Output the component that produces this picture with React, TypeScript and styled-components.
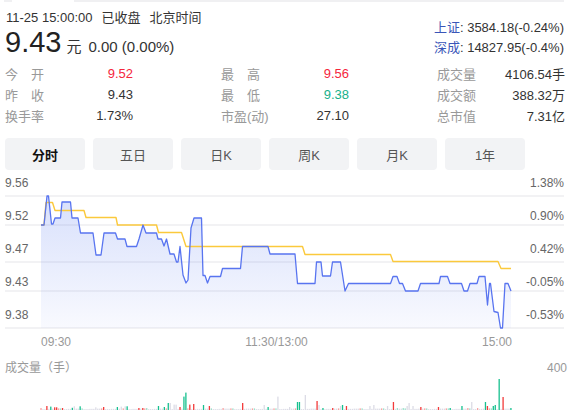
import React from 'react';
import styled, { createGlobalStyle } from 'styled-components';

const Global = createGlobalStyle`
  html, body { margin: 0; padding: 0; background: #fff; overflow: hidden; }
  body { font-family: "Liberation Sans", "Noto Sans CJK SC", sans-serif; color: #333; }
`;

const Page = styled.div`
  width: 569px;
  height: 410px;
  overflow: hidden;
  padding: 0 5px;
  box-sizing: border-box;
`;

const TopEdge = styled.div`
  display: flex;
  gap: 62px;
  height: 2px;
  margin-left: -1px;
`;

const EdgeSeg = styled.div<{ $grow?: boolean }>`
  background: #f0f0f2;
  width: ${(p) => (p.$grow ? 'auto' : '8px')};
  flex: ${(p) => (p.$grow ? '1' : 'none')};
`;

const Header = styled.div`
  display: flex;
  justify-content: space-between;
  padding-top: 6px;
`;

const HeaderLeft = styled.div`
  display: flex;
  flex-direction: column;
`;

const TimeLine = styled.div`
  font-size: 13px;
  line-height: 20px;
  padding-left: 1px;
  display: flex;
  gap: 9px;
  color: #333;
`;

const PriceRow = styled.div`
  display: flex;
  align-items: baseline;
  height: 29px;
`;

const Price = styled.span`
  font-size: 29px;
  line-height: 29px;
  color: #222;
`;

const Unit = styled.span`
  font-size: 15px;
  line-height: 1;
  margin-left: 5px;
  color: #333;
`;

const Change = styled.span`
  font-size: 15px;
  line-height: 1;
  margin-left: 7px;
  color: #333;
`;

const IndexBox = styled.div`
  margin-top: 10px;
  font-size: 13px;
  line-height: 20px;
  text-align: right;
  color: #333;
`;

const IndexName = styled.span`
  color: #3a56b8;
`;

const StatsGrid = styled.div`
  display: grid;
  grid-template-columns: repeat(3, 128px);
  column-gap: 88px;
  margin-top: 5px;
`;

const StatItem = styled.div`
  display: flex;
  justify-content: space-between;
  align-items: center;
  height: 21px;
  font-size: 13px;
`;

const StatLabel = styled.span`
  color: #999;
  min-width: 39px;
  text-align: justify;
  text-align-last: justify;
  white-space: nowrap;
`;

const StatValue = styled.span<{ $tone?: 'up' | 'down' }>`
  color: ${(p) => (p.$tone === 'up' ? '#f5263c' : p.$tone === 'down' ? '#18b08a' : '#333')};
`;

const TabBar = styled.div`
  display: flex;
  gap: 8px;
  margin-top: 12px;
`;

const Tab = styled.div<{ $active?: boolean }>`
  width: 80px;
  height: 32px;
  display: flex;
  align-items: center;
  justify-content: center;
  background: #f2f3f5;
  border-radius: 4px;
  font-size: 13px;
  color: ${(p) => (p.$active ? '#111' : '#555')};
  font-weight: ${(p) => (p.$active ? 700 : 400)};
`;

const ChartStack = styled.div`
  display: grid;
  height: 162px;
  margin-top: 2px;
`;

const ChartSvg = styled.svg`
  grid-area: 1 / 1;
  display: block;
`;

const Axis = styled.div<{ $side: 'left' | 'right' }>`
  grid-area: 1 / 1;
  justify-self: ${(p) => (p.$side === 'left' ? 'start' : 'end')};
  align-self: start;
  display: flex;
  flex-direction: column;
  align-items: ${(p) => (p.$side === 'left' ? 'flex-start' : 'flex-end')};
  gap: 19px;
  padding-top: 4px;
  font-size: 12px;
  line-height: 14px;
  color: #666;
`;

const TimeRow = styled.div`
  display: flex;
  justify-content: space-between;
  margin-top: 1px;
  padding: 0 52px 0 36px;
  font-size: 12px;
  line-height: 14px;
  color: #999;
`;

const VolumeHeader = styled.div`
  display: flex;
  justify-content: space-between;
  margin-top: 11px;
  margin-right: -3px;
  font-size: 12px;
  line-height: 16px;
  color: #999;
`;

const VolumeSvg = styled.svg`
  display: block;
`;

const stats: { label: string; value: string; tone?: 'up' | 'down' }[] = [
  { label: '今 开', value: '9.52', tone: 'up' },
  { label: '最 高', value: '9.56', tone: 'up' },
  { label: '成交量', value: '4106.54手' },
  { label: '昨 收', value: '9.43' },
  { label: '最 低', value: '9.38', tone: 'down' },
  { label: '成交额', value: '388.32万' },
  { label: '换手率', value: '1.73%' },
  { label: '市盈(动)', value: '27.10' },
  { label: '总市值', value: '7.31亿' },
];

const tabs = ['分时', '五日', '日K', '周K', '月K', '1年'];

const priceLine: [number, number][] = [
  [41, 225], [44, 225], [47, 196], [48.5, 196], [51.5, 224], [53, 224], [55, 218], [60.5, 218],
  [62, 202], [70.5, 202], [72, 218], [78, 218], [80.5, 233], [93, 233], [96, 255], [101, 255],
  [104, 233], [115.5, 233], [117.5, 239], [125, 239], [127, 246.5], [136.5, 246.5], [139, 239],
  [143, 225], [146, 233], [156.5, 233], [158, 239], [161.5, 239], [164, 246], [166.5, 239],
  [170, 254], [174, 254], [176.5, 262], [178, 262], [180, 246.5], [183, 275], [186, 283], [188, 280],
  [191, 228], [194, 218], [201.5, 218], [203, 275.5], [205, 275.5], [207.5, 283], [210, 276.5],
  [220.5, 276.5], [222.5, 268.5], [240.5, 268.5], [242.5, 246.5], [268, 246.5], [270, 254],
  [295, 254], [297.5, 283.5], [315, 283.5], [316.5, 262], [321, 262], [322.5, 276], [330.5, 276],
  [332.5, 262], [340.5, 262], [345, 291], [348.5, 283.5], [390.5, 283.5], [393, 276.5],
  [397, 276.5], [399.5, 283.5], [402.5, 283.5], [405.5, 291], [418, 291], [420.5, 283.5],
  [439, 283.5], [440.5, 276.5], [447.5, 276.5], [450, 283.5], [461.5, 283.5], [464, 291],
  [467.5, 291], [470, 283.5], [477, 283.5], [479, 276.5], [485, 276.5], [487.5, 305],
  [489.5, 283.5], [490.5, 283.5], [494, 311.5], [498, 312.5], [500.5, 328], [502.5, 328],
  [505, 283.5], [508, 283.5], [511, 291],
];

const avgLine: [number, number][] = [
  [41, 225], [44, 225], [46, 202.5], [52.5, 202.5], [55, 210.5], [84, 210.5], [86, 217.5],
  [116, 217.5], [117.5, 225], [156.5, 225], [158.5, 232.5], [181.5, 232.5], [186, 246.5],
  [302.5, 246.5], [305, 254.5], [390.5, 254.5], [393, 261.5], [498, 261.5], [501, 268.5],
  [511, 268.5],
];

const gridYs = [196, 225, 262, 291, 328];

const toPath = (pts: [number, number][]) =>
  pts.map(([x, y], i) => `${i === 0 ? 'M' : 'L'}${x} ${y}`).join(' ');

const linePath = toPath(priceLine);
const areaPath = `${linePath} L511 328 L41 328 Z`;
const avgPath = toPath(avgLine);

type Tone = 'r' | 'g' | 'k' | 'lr' | 'lg';
const volOverrides: [number, number, Tone][] = [
  [41, 1.3, 'lr'], [47, 3.3, 'r'], [51, 2.7, 'g'], [55, 2, 'r'], [57, 2, 'r'], [62, 1.3, 'r'],
  [73, 1.5, 'g'], [75, 3, 'k'], [80, 3, 'g'], [95, 2, 'k'], [103, 2.3, 'r'], [117, 2.3, 'g'],
  [122, 2.7, 'k'], [126, 3, 'k'], [128, 3, 'g'], [138, 1.3, 'r'], [143, 1.3, 'r'],
  [147, 1.3, 'lg'], [158, 3.3, 'g'], [164, 2.3, 'g'], [169, 6.3, 'g'], [171, 6.3, 'k'],
  [175, 4.7, 'k'], [177, 4.7, 'k'], [180, 2.3, 'r'], [183.3, 12.7, 'g'], [185.7, 16.7, 'g'],
  [189.3, 4.7, 'r'], [193.3, 5.3, 'r'], [203, 4.3, 'g'], [209, 3.3, 'r'], [223, 1.3, 'lr'],
  [242, 6.3, 'r'], [265, 4.3, 'k'], [269, 2.3, 'g'], [277.3, 12.7, 'k'], [289, 2.3, 'k'],
  [296.7, 7.3, 'g'], [298.6, 7.3, 'g'], [305, 14.3, 'k'], [316.7, 8.3, 'r'], [319, 4.3, 'k'],
  [322.7, 1.3, 'g'], [332, 1.3, 'r'], [340, 3.3, 'k'], [343.3, 4.3, 'g'], [347.3, 3.3, 'r'],
  [369, 3.3, 'k'], [373.3, 4.3, 'k'], [386.7, 3.3, 'k'], [392.7, 7.3, 'r'], [398.3, 1.3, 'lg'],
  [404, 1.3, 'lg'], [406.7, 3.3, 'k'], [410, 6.3, 'k'], [412.7, 3.3, 'k'], [420, 2.3, 'r'],
  [439.3, 2.3, 'r'], [449.3, 1.3, 'g'], [462.7, 3.3, 'g'], [468.3, 1.3, 'lr'],
  [472.7, 7.3, 'k'], [478.3, 1.3, 'lr'], [486, 7.3, 'g'], [488.3, 3.3, 'r'], [492.7, 3.3, 'g'],
  [494.3, 4.3, 'g'], [500, 30.3, 'g'], [504, 12.3, 'r'], [510, 1.3, 'g'],
];

const toneColor: Record<Tone, string> = {
  r: '#f23b3b',
  g: '#17c08f',
  k: '#dcdce6',
  lr: '#f7a3a3',
  lg: '#9fe0cc',
};

const STEP = 1.958;
const volumeBars = (() => {
  const bars = Array.from({ length: 241 }, (_, i) => {
    const seed = (i * 37) % 11;
    const tone: Tone = seed === 3 ? 'lr' : seed === 7 ? 'lg' : 'k';
    return { x: 41 + i * STEP, h: 0.9 + (seed % 4) * 0.25, tone };
  });
  volOverrides.forEach(([x, h, tone]) => {
    const i = Math.round((x - 41) / STEP);
    if (bars[i]) bars[i] = { x: bars[i].x, h: h + 0.7, tone };
  });
  return bars;
})();

export default function App() {
  return (
    <Page>
      <Global />
      <TopEdge>
        <EdgeSeg />
        <EdgeSeg $grow />
      </TopEdge>
      <Header>
        <HeaderLeft>
          <TimeLine>
            <span>11-25 15:00:00</span>
            <span>已收盘</span>
            <span>北京时间</span>
          </TimeLine>
          <PriceRow>
            <Price>9.43</Price>
            <Unit>元</Unit>
            <Change>0.00 (0.00%)</Change>
          </PriceRow>
        </HeaderLeft>
        <IndexBox>
          <div>
            <IndexName>上证</IndexName>: 3584.18(-0.24%)
          </div>
          <div>
            <IndexName>深成</IndexName>: 14827.95(-0.4%)
          </div>
        </IndexBox>
      </Header>

      <StatsGrid>
        {stats.map((s) => (
          <StatItem key={s.label}>
            <StatLabel>{s.label}</StatLabel>
            <StatValue $tone={s.tone}>{s.value}</StatValue>
          </StatItem>
        ))}
      </StatsGrid>

      <TabBar>
        {tabs.map((t, i) => (
          <Tab key={t} $active={i === 0}>
            {t}
          </Tab>
        ))}
      </TabBar>

      <ChartStack>
        <ChartSvg width={559} height={162} viewBox="5 172 559 162">
          <defs>
            <linearGradient id="areaFill" gradientUnits="userSpaceOnUse" x1="0" y1="196" x2="0" y2="328">
              <stop offset="0" stopColor="#5b7cf0" stopOpacity="0.24" />
              <stop offset="1" stopColor="#5b7cf0" stopOpacity="0.04" />
            </linearGradient>
          </defs>
          {gridYs.map((y) => (
            <line key={y} x1={5} x2={564} y1={y} y2={y} stroke="#f2f2f4" strokeWidth={2} />
          ))}
          <path d={areaPath} fill="url(#areaFill)" />
          <path d={avgPath} fill="none" stroke="#fbc93c" strokeWidth={1.4} strokeLinejoin="round" />
          <path d={linePath} fill="none" stroke="#5874f0" strokeWidth={1.3} strokeLinejoin="round" />
        </ChartSvg>
        <Axis $side="left">
          <span>9.56</span>
          <span>9.52</span>
          <span>9.47</span>
          <span>9.43</span>
          <span>9.38</span>
        </Axis>
        <Axis $side="right">
          <span>1.38%</span>
          <span>0.90%</span>
          <span>0.42%</span>
          <span>-0.05%</span>
          <span>-0.53%</span>
        </Axis>
      </ChartStack>

      <TimeRow>
        <span>09:30</span>
        <span>11:30/13:00</span>
        <span>15:00</span>
      </TimeRow>

      <VolumeHeader>
        <span>成交量（手）</span>
        <span>400</span>
      </VolumeHeader>

      <VolumeSvg width={559} height={34} viewBox="5 376 559 34">
        {volumeBars.map((b, i) => (
          <rect key={i} x={b.x - 0.65} y={410 - b.h} width={1.3} height={b.h} fill={toneColor[b.tone]} />
        ))}
      </VolumeSvg>
    </Page>
  );
}
